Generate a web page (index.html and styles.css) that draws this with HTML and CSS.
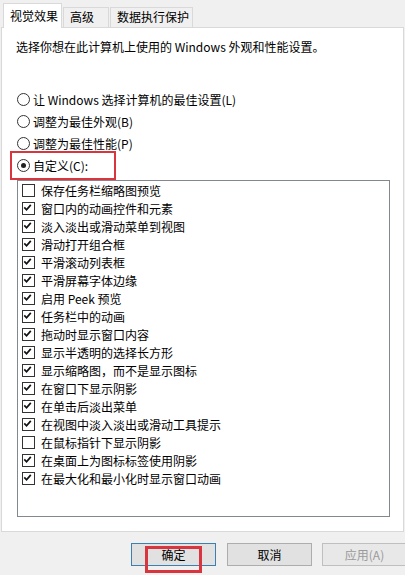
FILE: index.html
```html
<!DOCTYPE html>
<html lang="zh-CN">
<head>
<meta charset="utf-8">
<title>性能选项</title>
<link rel="stylesheet" href="styles.css">
</head>
<body>
<div class="dialog">
  <div class="tabs">
    <div class="tab active">视觉效果</div>
    <div class="tab t2">高级</div>
    <div class="tab t3">数据执行保护</div>
  </div>
  <div class="panel">
    <p class="intro">选择你想在此计算机上使用的 Windows 外观和性能设置。</p>
    <div class="radios">
      <div class="radio"><span class="rb"></span><span>让 Windows 选择计算机的最佳设置(L)</span></div>
      <div class="radio"><span class="rb"></span><span>调整为最佳外观(B)</span></div>
      <div class="radio"><span class="rb"></span><span>调整为最佳性能(P)</span></div>
      <div class="radio"><span class="rb on"></span><span>自定义(C):</span></div>
    </div>
    <div class="list">
      <div class="item"><span class="cb"></span><span>保存任务栏缩略图预览</span></div>
      <div class="item"><span class="cb on"><svg viewBox="0 0 13 13"><path d="M2.5 6.2 L5.2 9 L10.2 3.2"/></svg></span><span>窗口内的动画控件和元素</span></div>
      <div class="item"><span class="cb on"><svg viewBox="0 0 13 13"><path d="M2.5 6.2 L5.2 9 L10.2 3.2"/></svg></span><span>淡入淡出或滑动菜单到视图</span></div>
      <div class="item"><span class="cb on"><svg viewBox="0 0 13 13"><path d="M2.5 6.2 L5.2 9 L10.2 3.2"/></svg></span><span>滑动打开组合框</span></div>
      <div class="item"><span class="cb on"><svg viewBox="0 0 13 13"><path d="M2.5 6.2 L5.2 9 L10.2 3.2"/></svg></span><span>平滑滚动列表框</span></div>
      <div class="item"><span class="cb on"><svg viewBox="0 0 13 13"><path d="M2.5 6.2 L5.2 9 L10.2 3.2"/></svg></span><span>平滑屏幕字体边缘</span></div>
      <div class="item"><span class="cb on"><svg viewBox="0 0 13 13"><path d="M2.5 6.2 L5.2 9 L10.2 3.2"/></svg></span><span>启用 Peek 预览</span></div>
      <div class="item"><span class="cb on"><svg viewBox="0 0 13 13"><path d="M2.5 6.2 L5.2 9 L10.2 3.2"/></svg></span><span>任务栏中的动画</span></div>
      <div class="item"><span class="cb on"><svg viewBox="0 0 13 13"><path d="M2.5 6.2 L5.2 9 L10.2 3.2"/></svg></span><span>拖动时显示窗口内容</span></div>
      <div class="item"><span class="cb on"><svg viewBox="0 0 13 13"><path d="M2.5 6.2 L5.2 9 L10.2 3.2"/></svg></span><span>显示半透明的选择长方形</span></div>
      <div class="item"><span class="cb on"><svg viewBox="0 0 13 13"><path d="M2.5 6.2 L5.2 9 L10.2 3.2"/></svg></span><span>显示缩略图，而不是显示图标</span></div>
      <div class="item"><span class="cb on"><svg viewBox="0 0 13 13"><path d="M2.5 6.2 L5.2 9 L10.2 3.2"/></svg></span><span>在窗口下显示阴影</span></div>
      <div class="item"><span class="cb on"><svg viewBox="0 0 13 13"><path d="M2.5 6.2 L5.2 9 L10.2 3.2"/></svg></span><span>在单击后淡出菜单</span></div>
      <div class="item"><span class="cb on"><svg viewBox="0 0 13 13"><path d="M2.5 6.2 L5.2 9 L10.2 3.2"/></svg></span><span>在视图中淡入淡出或滑动工具提示</span></div>
      <div class="item"><span class="cb"></span><span>在鼠标指针下显示阴影</span></div>
      <div class="item"><span class="cb on"><svg viewBox="0 0 13 13"><path d="M2.5 6.2 L5.2 9 L10.2 3.2"/></svg></span><span>在桌面上为图标标签使用阴影</span></div>
      <div class="item"><span class="cb on"><svg viewBox="0 0 13 13"><path d="M2.5 6.2 L5.2 9 L10.2 3.2"/></svg></span><span>在最大化和最小化时显示窗口动画</span></div>
    </div>
  </div>
  <div class="buttons">
    <div class="btn default">确定</div>
    <div class="btn">取消</div>
    <div class="btn disabled">应用(A)</div>
  </div>
</div>
<div class="mark mark-custom"></div>
<div class="mark mark-ok"></div>
</body>
</html>
```
FILE: styles.css
```css
html, body {
  margin: 0;
  padding: 0;
}
body {
  width: 405px;
  height: 575px;
  overflow: hidden;
  background: #f0f0f0;
  font-family: "Noto Sans CJK SC", "Liberation Sans", sans-serif;
  font-size: 12px;
  color: #000;
  position: relative;
}
.dialog {
  padding-top: 3px;
}
.tabs {
  display: flex;
  align-items: flex-end;
  height: 24px;
  margin-left: 3px;
}
.tab {
  box-sizing: border-box;
  height: 20px;
  line-height: 18px;
  border: 1px solid #d9d9d9;
  border-bottom: none;
  background: #f0f0f0;
  padding: 0 6px;
  color: #000;
  white-space: nowrap;
}
.tab.active {
  height: 25px;
  line-height: 23px;
  width: 59px;
  background: #fff;
  border-color: #d9d9d9;
  margin-bottom: -1px;
  position: relative;
  z-index: 1;
}
.tab.t2 {
  width: 46px;
  margin-left: 1px;
}
.tab.t3 {
  width: 83px;
  margin-left: 1px;
}
.panel {
  box-sizing: border-box;
  width: 403px;
  height: 505px;
  margin-left: 1px;
  background: #fff;
  border: 1px solid #d9d9d9;
  padding: 11px 0 0 15px;
}
.intro {
  margin: 0 0 0 -1px;
  height: 16px;
  line-height: 16px;
  white-space: nowrap;
}
.radios {
  margin-top: 33px;
  display: flex;
  flex-direction: column;
}
.radio {
  display: flex;
  align-items: center;
  height: 22px;
  gap: 3px;
  white-space: nowrap;
}
.rb {
  box-sizing: border-box;
  width: 13px;
  height: 13px;
  border: 1px solid #333;
  border-radius: 50%;
  background: #fff;
  display: flex;
  align-items: center;
  justify-content: center;
}
.rb.on::after {
  content: "";
  width: 5px;
  height: 5px;
  border-radius: 50%;
  background: #222;
}
.list {
  box-sizing: border-box;
  margin-top: 4px;
  width: 373px;
  height: 337px;
  border: 1px solid #828790;
  padding: 0 0 0 4px;
  display: flex;
  flex-direction: column;
}
.item {
  display: flex;
  align-items: center;
  gap: 6px;
  height: 18px;
  white-space: nowrap;
}
.cb {
  box-sizing: border-box;
  width: 13px;
  height: 13px;
  border: 1px solid #333;
  background: #fff;
  display: block;
  flex: none;
}
.cb svg {
  display: block;
  width: 11px;
  height: 11px;
}
.cb svg path {
  fill: none;
  stroke: #111;
  stroke-width: 2;
  transform: translate(-1px, -1px);
}
.buttons {
  display: flex;
  margin-top: 11px;
  padding-left: 131px;
  gap: 10px;
}
.btn {
  box-sizing: border-box;
  width: 85px;
  height: 23px;
  line-height: 21px;
  text-align: center;
  border: 1px solid #adadad;
  background: #e1e1e1;
  flex: none;
}
.btn.default {
  border-color: #3c7fb1;
  margin-right: 1px;
}
.btn.disabled {
  color: #9a9a9a;
  border-color: #bfbfbf;
  background: #e8e8e8;
}
.mark {
  position: absolute;
  box-sizing: border-box;
  border: 2px solid #d9353f;
}
.mark-custom {
  left: 10px;
  top: 151px;
  width: 106px;
  height: 29px;
}
.mark-ok {
  left: 145px;
  top: 546px;
  width: 57px;
  height: 27px;
  border-width: 3px;
}
```
